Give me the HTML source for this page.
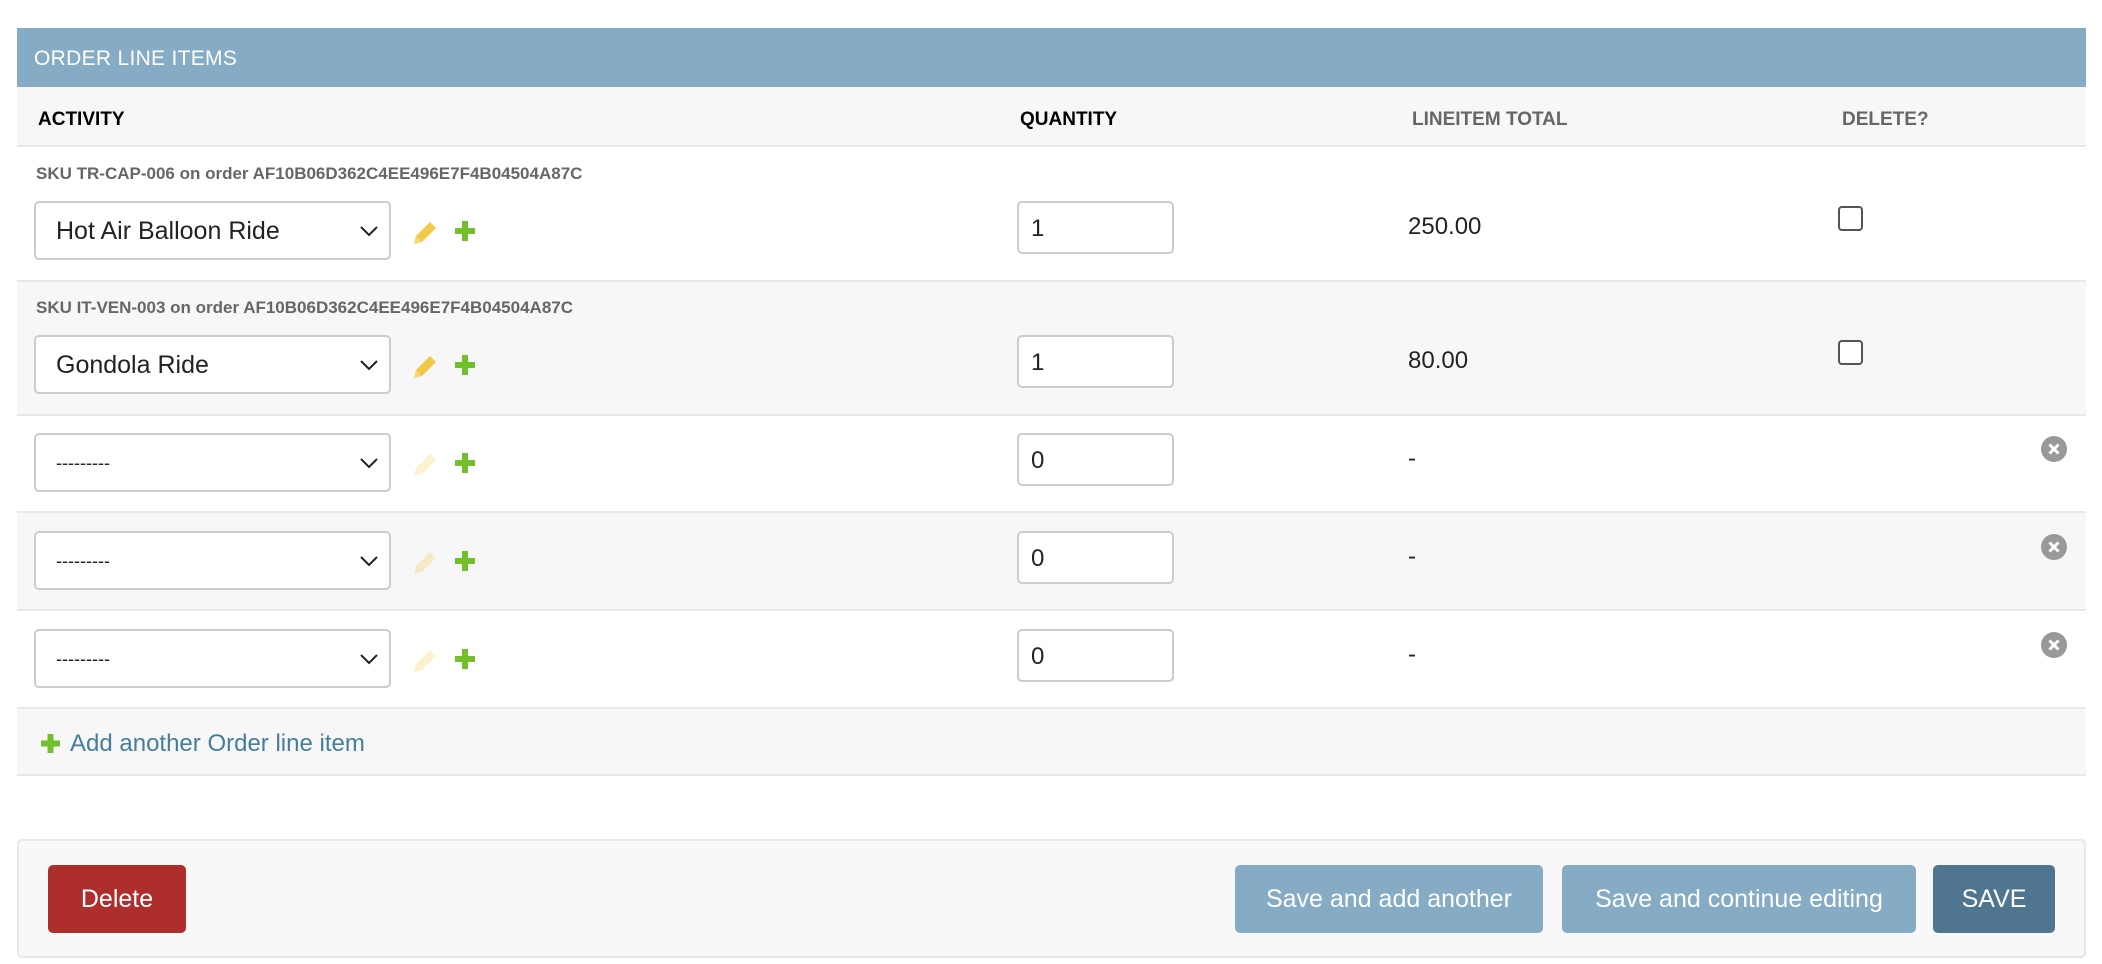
<!DOCTYPE html>
<html><head><meta charset="utf-8"><style>
*{box-sizing:border-box;margin:0;padding:0}
body{width:2102px;height:964px;background:#fff;font-family:"Liberation Sans",sans-serif;position:relative;overflow:hidden;color:#333}
.a{position:absolute}
.bar{left:17px;top:28px;width:2069px;height:59px;background:#85abc5;color:#fff;font-size:21px;padding:19px 0 0 17px;letter-spacing:.3px}
.row{left:17px;width:2069px;border-bottom:2px solid #e8e8e8}
.g{background:#f7f7f7}
.th{top:109px;font-size:19px;font-weight:bold;color:#000}
.sku{font-size:17px;font-weight:bold;color:#666;left:36px}
.sel{left:34px;width:357px;height:59px;border:2px solid #ccc;border-radius:5px;background:#fff;font-size:25px;padding:14px 0 0 20px;color:#222}
.sel svg{position:absolute;right:10px;top:22px}
.inp{left:1017px;width:157px;height:53px;border:2px solid #ccc;border-radius:5px;background:#fff;font-size:24px;padding:12px 0 0 12px;color:#222}
.tot{left:1408px;font-size:24px;color:#222}
.cb{left:1838px;width:25px;height:25px;border:2px solid #555;border-radius:4px;background:#fff}
.btn{top:865px;height:68px;border-radius:5px;color:#fff;font-size:25px;text-align:center;line-height:68px}
</style></head><body>
<div class="a bar">ORDER LINE ITEMS</div>
<div class="a row g" style="top:87px;height:60px"></div>
<div class="a th" style="left:38px">ACTIVITY</div>
<div class="a th" style="left:1020px">QUANTITY</div>
<div class="a th" style="left:1412px;color:#666">LINEITEM TOTAL</div>
<div class="a th" style="left:1842px;color:#666">DELETE?</div>

<div class="a row" style="top:147px;height:135px"></div>
<div class="a row g" style="top:282px;height:134px"></div>
<div class="a row" style="top:416px;height:97px"></div>
<div class="a row g" style="top:513px;height:98px"></div>
<div class="a row" style="top:611px;height:98px"></div>
<div class="a row g" style="top:709px;height:67px"></div>

<div class="a sku" style="top:164px">SKU TR-CAP-006 on order AF10B06D362C4EE496E7F4B04504A87C</div>
<div class="a sku" style="top:298px">SKU IT-VEN-003 on order AF10B06D362C4EE496E7F4B04504A87C</div>

<div class="a sel" style="top:201px">Hot Air Balloon Ride<svg width="20" height="12"><path d="M2 2l8 8 8-8" stroke="#222" stroke-width="2" fill="none"/></svg></div>
<div class="a sel" style="top:335px">Gondola Ride<svg width="20" height="12"><path d="M2 2l8 8 8-8" stroke="#222" stroke-width="2" fill="none"/></svg></div>
<div class="a sel" style="top:433px;font-size:18px;padding-top:18px">---------<svg width="20" height="12"><path d="M2 2l8 8 8-8" stroke="#222" stroke-width="2" fill="none"/></svg></div>
<div class="a sel" style="top:531px;font-size:18px;padding-top:18px">---------<svg width="20" height="12"><path d="M2 2l8 8 8-8" stroke="#222" stroke-width="2" fill="none"/></svg></div>
<div class="a sel" style="top:629px;font-size:18px;padding-top:18px">---------<svg width="20" height="12"><path d="M2 2l8 8 8-8" stroke="#222" stroke-width="2" fill="none"/></svg></div>

<svg class="a" style="left:411px;top:219px" width="28" height="28"><path d="M3 25l2-8L19 3l6 6-14 14z" fill="#efb80b" opacity=".75"/><path d="M3 25l2-8 6 6z" fill="#f5d77a"/></svg>
<svg class="a" style="left:454px;top:220px" width="22" height="22"><path d="M8 1h6v7h7v6h-7v7H8v-7H1V8h7z" fill="#70bf2b"/></svg>
<svg class="a" style="left:411px;top:353px" width="28" height="28"><path d="M3 25l2-8L19 3l6 6-14 14z" fill="#efb80b" opacity=".75"/><path d="M3 25l2-8 6 6z" fill="#f5d77a"/></svg>
<svg class="a" style="left:454px;top:354px" width="22" height="22"><path d="M8 1h6v7h7v6h-7v7H8v-7H1V8h7z" fill="#70bf2b"/></svg>
<svg class="a" style="left:411px;top:451px" width="28" height="28"><path d="M3 25l2-8L19 3l6 6-14 14z" fill="#efb80b" opacity=".2"/></svg>
<svg class="a" style="left:454px;top:452px" width="22" height="22"><path d="M8 1h6v7h7v6h-7v7H8v-7H1V8h7z" fill="#70bf2b"/></svg>
<svg class="a" style="left:411px;top:549px" width="28" height="28"><path d="M3 25l2-8L19 3l6 6-14 14z" fill="#efb80b" opacity=".2"/></svg>
<svg class="a" style="left:454px;top:550px" width="22" height="22"><path d="M8 1h6v7h7v6h-7v7H8v-7H1V8h7z" fill="#70bf2b"/></svg>
<svg class="a" style="left:411px;top:647px" width="28" height="28"><path d="M3 25l2-8L19 3l6 6-14 14z" fill="#efb80b" opacity=".2"/></svg>
<svg class="a" style="left:454px;top:648px" width="22" height="22"><path d="M8 1h6v7h7v6h-7v7H8v-7H1V8h7z" fill="#70bf2b"/></svg>

<div class="a inp" style="top:201px">1</div>
<div class="a inp" style="top:335px">1</div>
<div class="a inp" style="top:433px">0</div>
<div class="a inp" style="top:531px">0</div>
<div class="a inp" style="top:629px">0</div>

<div class="a tot" style="top:213px">250.00</div>
<div class="a tot" style="top:347px">80.00</div>
<div class="a tot" style="top:445px">-</div>
<div class="a tot" style="top:543px">-</div>
<div class="a tot" style="top:641px">-</div>

<div class="a cb" style="top:206px"></div>
<div class="a cb" style="top:340px"></div>

<svg class="a" style="left:2041px;top:436px" width="26" height="26"><circle cx="13" cy="13" r="13" fill="#999"/><path d="M8.5 8.5l9 9M17.5 8.5l-9 9" stroke="#fff" stroke-width="3"/></svg>
<svg class="a" style="left:2041px;top:534px" width="26" height="26"><circle cx="13" cy="13" r="13" fill="#999"/><path d="M8.5 8.5l9 9M17.5 8.5l-9 9" stroke="#fff" stroke-width="3"/></svg>
<svg class="a" style="left:2041px;top:632px" width="26" height="26"><circle cx="13" cy="13" r="13" fill="#999"/><path d="M8.5 8.5l9 9M17.5 8.5l-9 9" stroke="#fff" stroke-width="3"/></svg>

<svg class="a" style="left:40px;top:733px" width="21" height="21"><path d="M7.5 1h6v6.5H20v6h-6.5V20h-6v-6.5H1v-6h6.5z" fill="#70bf2b"/></svg>
<div class="a" style="left:70px;top:730px;font-size:24px;color:#447e9b">Add another Order line item</div>

<div class="a" style="left:17px;top:839px;width:2069px;height:119px;background:#f8f8f8;border:2px solid #e8e8e8;border-radius:5px"></div>
<div class="a btn" style="left:48px;width:138px;background:#ad2e2b">Delete</div>
<div class="a btn" style="left:1235px;width:308px;background:#85abc5">Save and add another</div>
<div class="a btn" style="left:1562px;width:354px;background:#85abc5">Save and continue editing</div>
<div class="a btn" style="left:1933px;width:122px;background:#4f7590">SAVE</div>
</body></html>
